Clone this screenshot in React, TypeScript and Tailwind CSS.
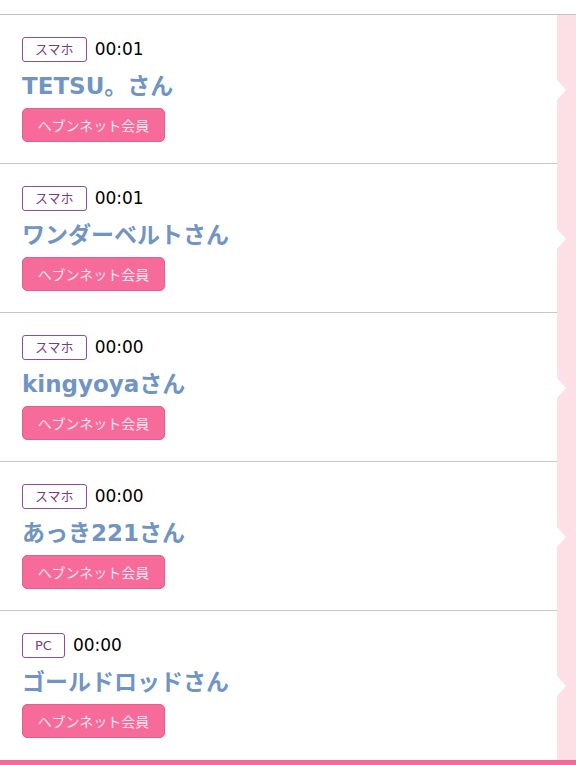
const rows = [
  { device: "スマホ", time: "00:01", name: "TETSU。さん" },
  { device: "スマホ", time: "00:01", name: "ワンダーベルトさん" },
  { device: "スマホ", time: "00:00", name: "kingyoyaさん" },
  { device: "スマホ", time: "00:00", name: "あっき221さん" },
  { device: "PC", time: "00:00", name: "ゴールドロッドさん" },
];

export default function App() {
  return (
    <div className="w-[576px] h-[765px] overflow-hidden bg-white font-['Noto_Sans_CJK_JP','Noto_Sans',sans-serif]">
      <div className="h-[15px] border-b border-[#c2c2c2]" />
      {rows.map((r, i) => (
        <div key={i} className="flex h-[149px]">
          <div
            className={
              "flex-1 flex flex-col pl-[22px] pt-[21px] " +
              (i < rows.length - 1 ? "border-b border-[#c8c8c8]" : "")
            }
          >
            <div className="flex items-center gap-[8px] h-[26px]">
              <span className="h-[25px] px-[12px] flex items-center border border-[#8e4d96] rounded-[3px] text-[13px] text-[#7b3c84] leading-none font-['DejaVu_Sans','Noto_Sans_CJK_JP',sans-serif]">
                {r.device}
              </span>
              <span className="text-[17px] text-black leading-none font-['DejaVu_Sans',sans-serif]">
                {r.time}
              </span>
            </div>
            <div className="mt-[8px] h-[32px] flex items-center text-[23px] font-semibold text-[#7095c4] leading-none font-['DejaVu_Sans','Noto_Sans_CJK_JP',sans-serif]">
              {r.name}
            </div>
            <div className="mt-[6px]">
              <span className="inline-flex items-center justify-center w-[143px] h-[34px] rounded-[5px] bg-[#f76b9b] border border-[#e45e8c] text-[14px] text-[#fde6ee] leading-none">
                ヘブンネット会員
              </span>
            </div>
          </div>
          <div className="w-[19px] bg-[#fde0e6] flex items-center">
            <div className="w-0 h-0 border-l-[9px] border-l-white border-y-[10px] border-y-transparent" />
          </div>
        </div>
      ))}
      <div className="h-[10px] bg-[#f06b97]" />
    </div>
  );
}
